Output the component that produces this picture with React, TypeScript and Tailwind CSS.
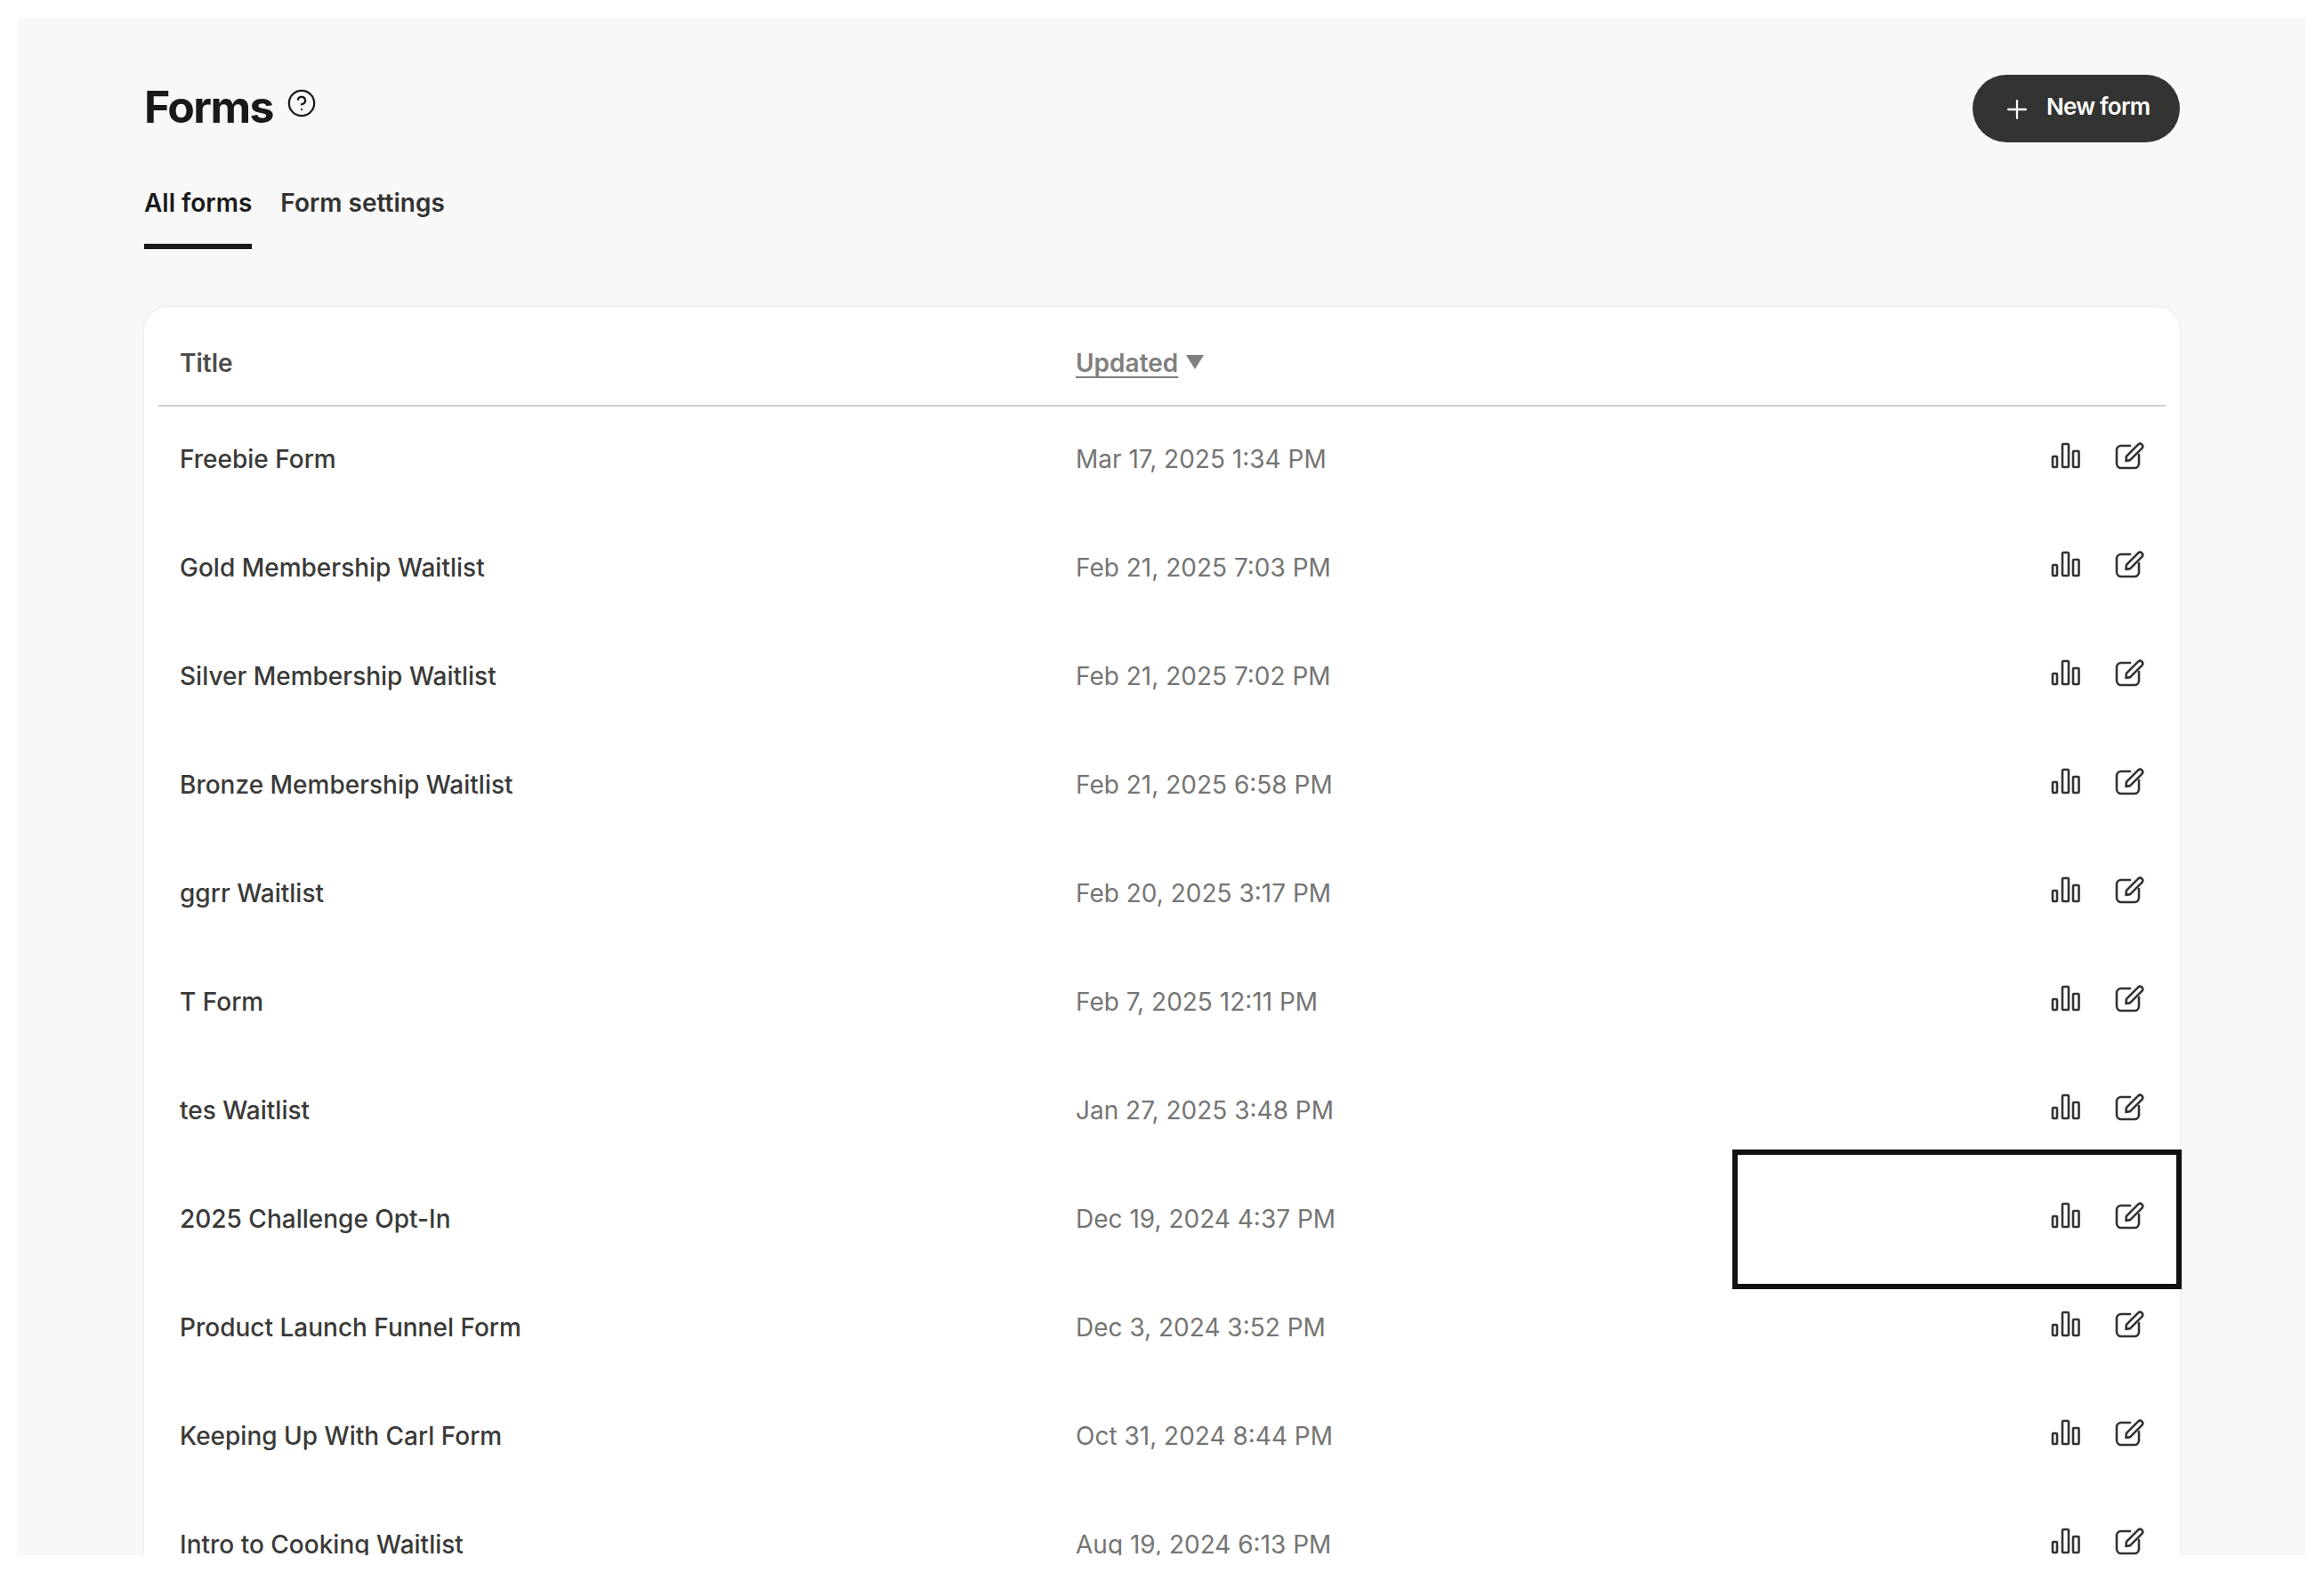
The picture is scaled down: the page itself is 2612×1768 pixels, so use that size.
import { CircleHelp, Plus } from "lucide-react";

const rows: [string, string][] = [
  ["Freebie Form", "Mar 17, 2025 1:34 PM"],
  ["Gold Membership Waitlist", "Feb 21, 2025 7:03 PM"],
  ["Silver Membership Waitlist", "Feb 21, 2025 7:02 PM"],
  ["Bronze Membership Waitlist", "Feb 21, 2025 6:58 PM"],
  ["ggrr Waitlist", "Feb 20, 2025 3:17 PM"],
  ["T Form", "Feb 7, 2025 12:11 PM"],
  ["tes Waitlist", "Jan 27, 2025 3:48 PM"],
  ["2025 Challenge Opt-In", "Dec 19, 2024 4:37 PM"],
  ["Product Launch Funnel Form", "Dec 3, 2024 3:52 PM"],
  ["Keeping Up With Carl Form", "Oct 31, 2024 8:44 PM"],
  ["Intro to Cooking Waitlist", "Aug 19, 2024 6:13 PM"],
];

function BarsIcon() {
  return (
    <svg width="36" height="32" viewBox="0 0 36 32" fill="none" stroke="#333331" strokeWidth="2.6" strokeLinejoin="round" className="shrink-0">
      <rect x="3" y="17" width="5" height="12" rx="1" />
      <rect x="14" y="3" width="7" height="26" rx="1.2" />
      <rect x="26" y="11" width="6.5" height="18" rx="1" />
    </svg>
  );
}

function EditIcon() {
  return (
    <svg width="36" height="34" viewBox="0 0 36 34" fill="none" stroke="#333331" strokeWidth="2.6" strokeLinecap="round" strokeLinejoin="round" className="shrink-0">
      <path d="M19 6H9a5 5 0 0 0-5 5V26a5 5 0 0 0 5 5H24a5 5 0 0 0 5-5V16" />
      <path d="M28.4 4.4a3 3 0 0 1 4.2 4.2L19.1 22.1L14.5 23L14.9 17.9Z" />
    </svg>
  );
}

export default function App() {
  return (
    <div className="h-[1768px] bg-white p-5 font-['Inter',sans-serif]">
      <div className="relative h-full overflow-hidden bg-[#f8f8f8] px-[142px]">
        <header className="flex h-[140px] items-start justify-between pt-[64px]">
          <div className="flex items-start gap-[15px]">
            <h1 className="-mt-[1px] text-[50px] font-bold leading-[74px] tracking-[-1.6px] text-[#1a1a1a]">Forms</h1>
            <CircleHelp size={34} strokeWidth={1.6} color="#1a1a1a" className="mt-[15px]" />
          </div>
          <button className="flex h-[76px] w-[233px] items-center rounded-full bg-[#333331] pl-[33px] text-[26px] font-semibold tracking-[-0.75px] text-white">
            <Plus size={34} strokeWidth={1.6} className="mt-[2px]" />
            <span className="-mt-[6px] ml-[16px]">New form</span>
          </button>
        </header>
        <nav className="mb-[65px] flex h-[120px] gap-[32px] text-[28px] font-semibold">
          <a className="h-full border-b-[6px] border-[#1a1a1a] pt-[47px] text-[#1a1a1a]">All forms</a>
          <a className="h-full pt-[47px] text-[#333331]">Form settings</a>
        </nav>
        <section className="rounded-t-[27px] bg-white px-4 shadow-[0_0_5px_rgba(0,0,0,0.07)]">
          <div className="grid h-[112px] grid-cols-[1007px_1fr] items-center border-b-2 border-[#d0d0d0] px-6 pt-[16px] text-[28px] font-semibold">
            <span className="text-[#4d4d4b]">Title</span>
            <span className="flex items-center gap-[8px] text-[#7f7f7d]">
              <span className="underline decoration-2 underline-offset-[5px] [text-decoration-skip-ink:none]">Updated</span>
              <svg width="22" height="18" viewBox="0 0 22 18" className="-mt-[2px]">
                <path d="M1 1H21L11 17Z" fill="#7f7f7d" />
              </svg>
            </span>
          </div>
          {rows.map(([title, date]) => (
            <div key={title} className="grid h-[122px] grid-cols-[1007px_1fr_auto] items-center px-6 pb-[4px] text-[28px]">
              <span className="font-medium text-[#3a3a38]">{title}</span>
              <span className="text-[#757573]">{date}</span>
              <span className="-mr-[1px] -mt-[8px] flex items-center gap-[35px]">
                <BarsIcon />
                <EditIcon />
              </span>
            </div>
          ))}
        </section>
      </div>
      <div className="absolute left-[1947px] top-[1292px] h-[157px] w-[505px] border-[6px] border-[#111111]" />
    </div>
  );
}
